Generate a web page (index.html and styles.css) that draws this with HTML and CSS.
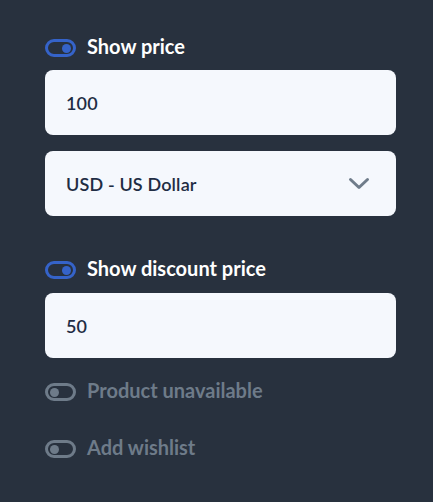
FILE: index.html
```html
<!DOCTYPE html>
<html lang="en">
<head>
<meta charset="utf-8">
<title>Price settings</title>
<link rel="stylesheet" href="styles.css">
</head>
<body>
<div class="panel">
  <div class="toggle-row row-first">
    <span class="toggle on"><span class="knob"></span></span>
    <span class="label">Show price</span>
  </div>
  <div class="field field-gap">100</div>
  <div class="field select">
    <span>USD - US Dollar</span>
    <svg class="chevron" width="22" height="13" viewBox="0 0 22 13"><polyline points="2.5,2.5 11,10.5 19.5,2.5" fill="none" stroke="#6f7c8a" stroke-width="3" stroke-linecap="round" stroke-linejoin="round"/></svg>
  </div>
  <div class="toggle-row row-discount">
    <span class="toggle on"><span class="knob"></span></span>
    <span class="label">Show discount price</span>
  </div>
  <div class="field">50</div>
  <div class="toggle-row row-unavailable disabled">
    <span class="toggle"><span class="knob"></span></span>
    <span class="label">Product unavailable</span>
  </div>
  <div class="toggle-row row-wishlist disabled">
    <span class="toggle"><span class="knob"></span></span>
    <span class="label">Add wishlist</span>
  </div>
</div>
</body>
</html>
```
FILE: styles.css
```css
html, body {
  margin: 0;
  padding: 0;
  background: #28313e;
}
body {
  font-family: Lato, "Liberation Sans", sans-serif;
  width: 433px;
  height: 502px;
  overflow: hidden;
}
.panel {
  display: flex;
  flex-direction: column;
  padding: 37px 0 0 45px;
  width: 351px;
}
.toggle-row {
  display: flex;
  align-items: center;
  gap: 11px;
  height: 22px;
}
.row-first { margin-bottom: 11px; }
.row-discount { margin-top: 43px; margin-bottom: 12px; }
.row-unavailable { margin-top: 23px; }
.row-wishlist { margin-top: 35px; }
.label {
  font-size: 20px;
  font-weight: 700;
  color: #ffffff;
  line-height: 22px;
  padding-bottom: 5px;
}
.disabled .label { color: #6e7b89; }
.toggle {
  box-sizing: border-box;
  width: 31px;
  height: 18px;
  border: 3px solid #6e7b89;
  border-radius: 9px;
  display: flex;
  align-items: center;
  padding: 0 2px;
  flex: none;
}
.knob {
  width: 9px;
  height: 9px;
  border-radius: 50%;
  background: #6e7b89;
}
.toggle.on {
  border-color: #3563c9;
  justify-content: flex-end;
}
.toggle.on .knob { background: #3563c9; }
.field {
  box-sizing: border-box;
  height: 65px;
  background: #f5f8fd;
  border-radius: 8px;
  padding: 0 21px;
  display: flex;
  align-items: center;
  font-size: 18px;
  font-weight: 600;
  letter-spacing: 0.15px;
  color: #1f2d44;
}
.field-gap { margin-bottom: 16px; }
.select {
  justify-content: space-between;
  padding-right: 26px;
}
.chevron { display: block; }
```
